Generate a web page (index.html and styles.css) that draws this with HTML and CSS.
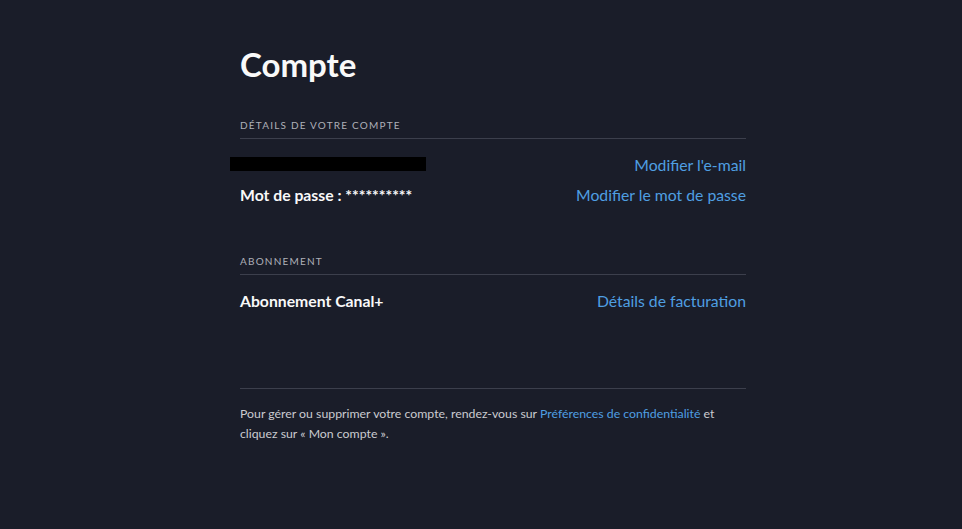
FILE: index.html
```html
<!DOCTYPE html>
<html lang="fr">
<head>
    <meta charset="UTF-8">
    <meta name="viewport" content="width=device-width, initial-scale=1.0">
    <title>Compte</title>
    <link rel="stylesheet" href="styles.css">
</head>
<body>
    <main class="account">
        <h1>Compte</h1>

        <section class="account-section">
            <h2>Détails de votre compte</h2>
            <div class="row">
                <span class="redacted"></span>
                <a href="#">Modifier l'e-mail</a>
            </div>
            <div class="row">
                <span class="value">Mot de passe : **********</span>
                <a href="#">Modifier le mot de passe</a>
            </div>
        </section>

        <section class="account-section">
            <h2>Abonnement</h2>
            <div class="row">
                <span class="value">Abonnement Canal+</span>
                <a href="#">Détails de facturation</a>
            </div>
        </section>

        <footer class="account-footer">
            <p>Pour gérer ou supprimer votre compte, rendez-vous sur <a href="#">Préférences de confidentialité</a> et cliquez sur « Mon compte ».</p>
        </footer>
    </main>
</body>
</html>
```

FILE: styles.css
```css
body {
    font-family: Lato, "Noto Sans", sans-serif;
    background-color: #1a1d29;
    color: #f9f9f9;
    margin: 0;
    padding: 0;
}
a {
    color: #4f9fe2;
    text-decoration: none;
}
.account {
    width: 506px;
    margin: 0 auto;
    padding: 45px 0 40px;
    position: relative;
    left: 12px;
}
h1 {
    font-size: 33px;
    font-weight: 700;
    margin: 0 0 36px;
    line-height: 38px;
}
.account-section {
    margin-bottom: 46px;
}
.account-section h2 {
    font-size: 10px;
    font-weight: 400;
    letter-spacing: 1.2px;
    text-transform: uppercase;
    color: #aeb0b8;
    margin: 0;
    padding-bottom: 7px;
    border-bottom: 1px solid #3c3f4c;
}
.row {
    display: flex;
    justify-content: space-between;
    align-items: center;
    height: 30px;
    font-size: 15.75px;
}
.account-section h2 + .row {
    margin-top: 10px;
}
.value {
    font-weight: 700;
}
.redacted {
    display: block;
    width: 196px;
    height: 14px;
    background: #000;
    margin-left: -10px;
}
.account-footer {
    margin-top: 73px;
    border-top: 1px solid #3c3f4c;
    padding-top: 15px;
}
.account-footer p {
    font-size: 12.3px;
    line-height: 20px;
    color: #cacbd0;
    margin: 0;
}
```
